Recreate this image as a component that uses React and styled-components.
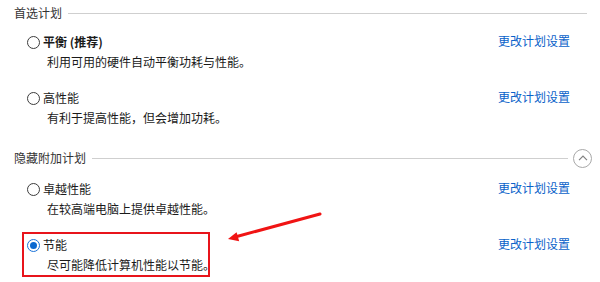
import React from "react";
import styled, { createGlobalStyle } from "styled-components";

const sections = [
  {
    title: "首选计划",
    collapsible: false,
    plans: [
      { name: "平衡", note: " (推荐)", desc: "利用可用的硬件自动平衡功耗与性能。", bold: true },
      { name: "高性能", desc: "有利于提高性能，但会增加功耗。" },
    ],
  },
  {
    title: "隐藏附加计划",
    collapsible: true,
    plans: [
      { name: "卓越性能", desc: "在较高端电脑上提供卓越性能。" },
      { name: "节能", desc: "尽可能降低计算机性能以节能。", checked: true, marked: true },
    ],
  },
];

export default function App() {
  return (
    <>
      <GlobalStyle />
      <Page>
        {sections.map((section, i) => (
          <Section key={section.title} first={i === 0}>
            <SectionHeader collapsible={section.collapsible}>
              <SectionTitle>{section.title}</SectionTitle>
              <Rule />
              {section.collapsible && (
                <CollapseButton>
                  <svg width="10" height="6" viewBox="0 0 10 6">
                    <path d="M1 5.2 L5 1.2 L9 5.2" fill="none" stroke="#808080" strokeWidth="1.2" />
                  </svg>
                </CollapseButton>
              )}
            </SectionHeader>
            <PlanList first={i === 0}>
              {section.plans.map((plan) => (
                <Plan key={plan.name}>
                  <PlanMain marked={plan.marked}>
                    <PlanRow>
                      <Radio checked={plan.checked} />
                      <PlanName bold={plan.bold}>
                        {plan.name}
                        {plan.note}
                      </PlanName>
                    </PlanRow>
                    <PlanDesc>{plan.desc}</PlanDesc>
                  </PlanMain>
                  <PlanLink>更改计划设置</PlanLink>
                </Plan>
              ))}
            </PlanList>
          </Section>
        ))}
        <Arrow width="600" height="282" viewBox="0 0 600 282">
          <line x1="320" y1="214" x2="235" y2="237" stroke="#f01414" strokeWidth="3" strokeLinecap="round" />
          <polygon points="228,239 236.6,232.3 239.2,241.2" fill="#f01414" />
        </Arrow>
      </Page>
    </>
  );
}

const GlobalStyle = createGlobalStyle`
  html, body {
    margin: 0;
    padding: 0;
    background: #fff;
  }
  body {
    font-family: "Noto Sans CJK SC", "Noto Sans", sans-serif;
    font-size: 12px;
    color: #1a1a1a;
  }
`;

const Page = styled.div`
  position: relative;
  width: 600px;
  height: 282px;
  box-sizing: border-box;
  padding: 3px 13px 0 14px;
  overflow: hidden;
`;

const Section = styled.section`
  margin-top: ${(props) => (props.first ? "0" : "20px")};
`;

const SectionHeader = styled.div`
  display: flex;
  align-items: center;
  height: 20px;
  margin-right: ${(props) => (props.collapsible ? "-5px" : "0")};
`;

const SectionTitle = styled.span`
  font-size: 12px;
  line-height: 20px;
  color: #333;
`;

const Rule = styled.div`
  flex: 1;
  height: 1px;
  margin-left: 6px;
  background: #cfcfcf;
`;

const CollapseButton = styled.div`
  width: 17px;
  height: 17px;
  margin-left: 5px;
  border: 1px solid #a8a8a8;
  border-radius: 50%;
  display: flex;
  align-items: center;
  justify-content: center;
`;

const PlanList = styled.div`
  display: flex;
  flex-direction: column;
  gap: 16px;
  margin-top: ${(props) => (props.first ? "9px" : "11px")};
`;

const Plan = styled.div`
  display: flex;
  justify-content: space-between;
  align-items: flex-start;
`;

const PlanMain = styled.div`
  position: relative;

  &::after {
    content: "";
    display: ${(props) => (props.marked ? "block" : "none")};
    position: absolute;
    left: 8px;
    top: -3px;
    bottom: -2px;
    width: 188px;
    box-sizing: border-box;
    border: 2px solid #e8141b;
  }
`;

const PlanRow = styled.div`
  display: flex;
  align-items: center;
  height: 20px;
`;

const Radio = styled.span`
  position: relative;
  width: 13px;
  height: 13px;
  margin-left: 13px;
  box-sizing: border-box;
  border-radius: 50%;
  border: 1px solid ${(props) => (props.checked ? "#1a73d9" : "#3c3c3c")};

  &::after {
    content: "";
    display: ${(props) => (props.checked ? "block" : "none")};
    position: absolute;
    left: 2px;
    top: 2px;
    width: 7px;
    height: 7px;
    border-radius: 50%;
    background: #0a68d0;
  }
`;

const PlanName = styled.span`
  margin-left: 3px;
  font-size: 12px;
  line-height: 20px;
  font-weight: ${(props) => (props.bold ? 700 : 400)};
`;

const PlanDesc = styled.div`
  padding-left: 33px;
  font-size: 12px;
  line-height: 20px;
`;

const PlanLink = styled.span`
  margin-top: -1px;
  margin-right: 17px;
  font-size: 12px;
  line-height: 20px;
  color: #0a62c9;
  cursor: pointer;
`;

const Arrow = styled.svg`
  position: absolute;
  left: 0;
  top: 0;
  pointer-events: none;
`;
